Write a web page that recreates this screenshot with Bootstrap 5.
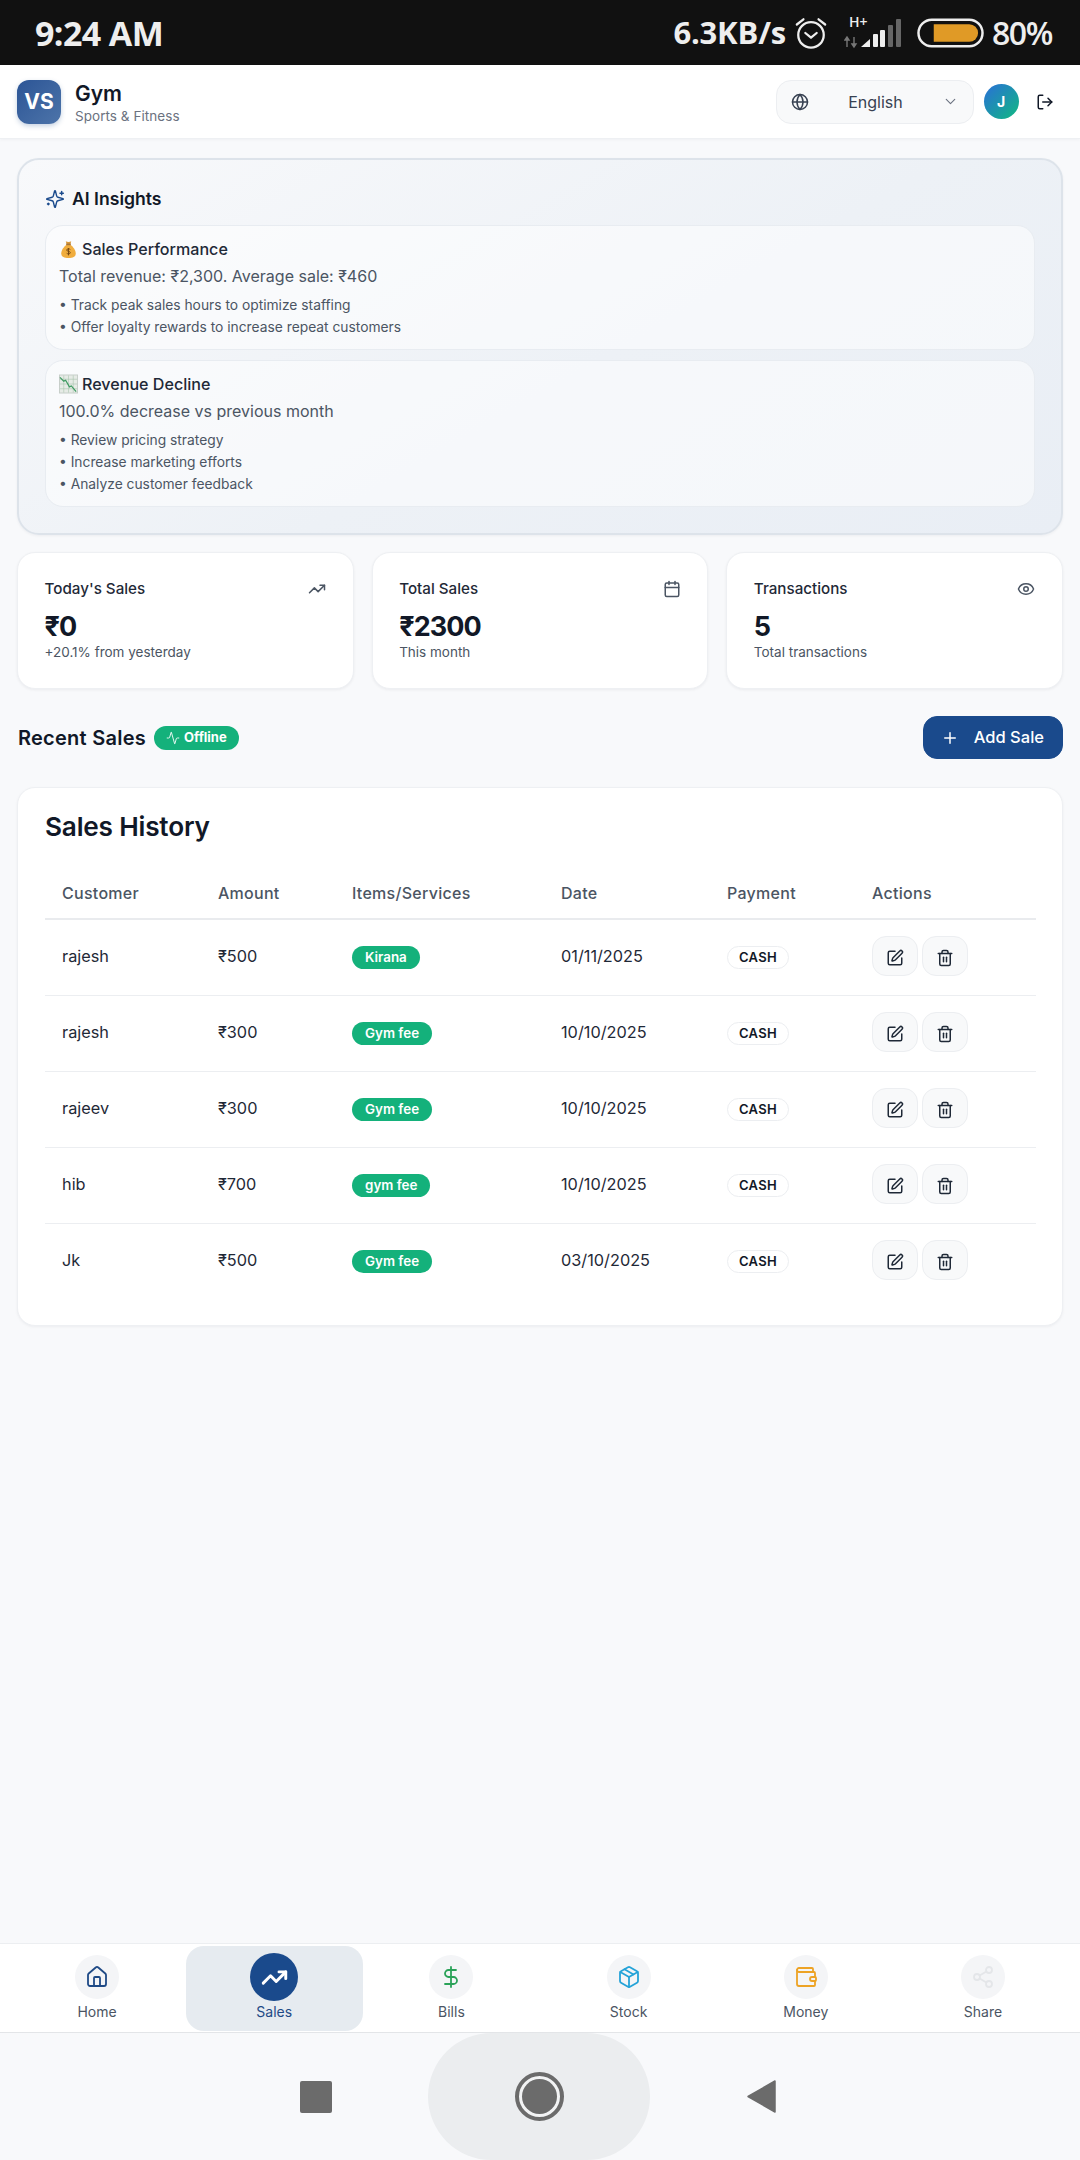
<!DOCTYPE html>
<html lang="en">
<head>
<meta charset="utf-8">
<title>Gym Sales</title>
<link href="https://cdn.jsdelivr.net/npm/bootstrap@5.3.0/dist/css/bootstrap.min.css" rel="stylesheet">
<style>
:root{--ink:#111827;--muted:#4b5563;--navy:#1a4a8c;--green:#14b17b;}
html,body{height:100%;}
body{height:2160px;background:#f8f9fb;font-family:Inter,"Noto Sans",sans-serif;color:var(--ink);overflow:hidden;}
.ic{width:18px;height:18px;fill:none;stroke:currentColor;stroke-width:2;stroke-linecap:round;stroke-linejoin:round;flex:none;}
.phone-status{height:65px;background:#111;color:#eee;font-family:"Open Sans",sans-serif;padding:0 28px 0 35px;}
.st-time{font-size:34px;font-weight:700;letter-spacing:-.6px;line-height:1;}
.st-speed{font-size:31px;font-weight:700;line-height:1;letter-spacing:-.2px;}
.st-pct{font-size:32px;font-weight:600;line-height:1;letter-spacing:-1.4px;}
.app-head{height:74px;background:#fff;border-bottom:1px solid #eef0f3;box-shadow:0 1px 3px rgba(17,24,39,.04);padding:0 17px;}
.logo-tile{width:44px;height:44px;margin-right:14px;border-radius:12px;background:linear-gradient(135deg,#2c5596,#4d74a9);color:#fff;font-weight:700;font-size:21px;box-shadow:0 2px 5px rgba(26,74,140,.25);}
.head-txt{padding-top:3px;}
.head-name{font-size:21px;font-weight:600;line-height:26px;}
.head-sub{font-size:13.5px;line-height:18px;color:#6b7280;letter-spacing:.05px;}
.lang-box{width:198px;height:44px;background:#f8f9fa;border:1px solid #eceef1;border-radius:15px;padding:0 14px;font-size:16px;color:#374151;}
.lang-box .lbl{flex:1;text-align:center;}
.lang-box .chev{color:#6b7280;width:17px;height:17px;stroke-width:1.6;}
.avatar-dot{width:35px;height:35px;margin-left:9.5px;border-radius:50%;background:linear-gradient(135deg,#2a6fd8,#10b981);color:#fff;font-weight:700;font-size:14px;}
.out-ic{margin-left:17px;margin-right:9.5px;}
.page-body{padding:19px 17px 0;}
.ai-panel{border:2px solid #dde3ea;border-radius:22px;background:linear-gradient(150deg,#f8f9fb 0%,#edf1f6 55%,#e9eef5 100%);padding:26px;margin-bottom:17px;box-shadow:0 1px 3px rgba(17,24,39,.05);}
.ai-title{font-size:17.6px;font-weight:600;line-height:26px;margin-bottom:13px;color:#111827;gap:7px;}
.ai-title .ic{color:var(--navy);width:20px;height:20px;stroke-width:1.7;}
.ai-item{background:rgba(255,255,255,.5);border:1px solid #e8ecf1;border-radius:18px;padding:11px 13px 11px;margin-bottom:10px;}
.ai-item:last-child{margin-bottom:0;}
.ai-h{font-size:16.1px;font-weight:500;line-height:24px;color:#1f2937;}
.ai-d{font-size:16px;line-height:24px;color:#4b5563;margin-top:3px;margin-bottom:6px;}
.ai-b{font-size:13.8px;line-height:22px;color:#4b5563;}
.ai-b ul{margin:0;padding:0;list-style:none;}
.emo{width:19px;height:20px;vertical-align:-4px;margin-right:4px;}
.stat-grid{display:grid;grid-template-columns:repeat(3,1fr);gap:18px;margin-bottom:27px;}
.stat-tile{height:137px;border:1px solid #eef0f3;border-radius:18px;padding:24px 26.5px;box-shadow:0 1px 3px rgba(17,24,39,.06);}
.stat-t{font-size:15.2px;font-weight:500;line-height:24px;color:#1f2937;}
.stat-t .ic{color:#4b5563;}
.stat-v{font-size:27px;font-weight:700;letter-spacing:-.9px;line-height:32px;margin-top:10px;color:#111827;}
.stat-s{font-size:13.5px;line-height:20px;margin-top:-1px;color:#4b5563;}
.rec-h{font-size:20px;font-weight:600;line-height:1;color:#111827;letter-spacing:.25px;margin-left:1px;}
.off-pill{height:24px;padding:0 12px;border-radius:12px;background:var(--green);color:#fff;font-size:13px;font-weight:700;gap:4px;}
.off-pill .ic{width:14px;height:14px;stroke-width:1.5;}
.add-btn{width:140px;height:43px;background:var(--navy);border-color:var(--navy);color:#fff;border-radius:14px;font-size:16.5px;font-weight:500;padding:0 18px 0 17px;}
.add-btn:hover{background:var(--navy);color:#fff;}
.sec-row{margin-bottom:28px;}
.hist-card{border:1px solid #eef0f3;border-radius:18px;padding:19px 27px 26px;box-shadow:0 1px 3px rgba(17,24,39,.05);}
.hist-t{font-size:26.2px;font-weight:600;line-height:40px;margin:0 0 20px;color:#111827;letter-spacing:-.2px;}
.sale-tbl{margin:0;table-layout:fixed;width:100%;}
.sale-tbl th,.sale-tbl td{padding:0 0 0 17px;vertical-align:middle;background:transparent;border-bottom:1px solid #eceef1;font-size:16.3px;}
.sale-tbl th{height:52px;font-weight:500;font-size:16px;color:#4b5563;letter-spacing:.28px;border-bottom:2px solid #e9ebee;}
.sale-tbl td{height:76px;color:#1f2937;padding-bottom:2px;}
.sale-tbl tbody tr:last-child td{border-bottom:0;}
.cw1{width:156px;}.cw2{width:134px;}.cw3{width:209px;}.cw4{width:166px;}.cw5{width:145px;}.cw6{width:181px;}
.tag-green{display:inline-block;height:23px;line-height:23px;padding:0 13px;border-radius:12px;background:var(--green);color:#fff;font-size:13.4px;font-weight:600;}
.tag-pay{display:inline-block;height:23px;line-height:21px;padding:0 11px;border-radius:12px;border:1px solid #eceef1;background:#fff;color:#111827;font-size:13px;font-weight:600;letter-spacing:.3px;}
.act-btn{width:45.5px;height:40px;padding:0;border-radius:14px;background:#f8f9fa;border:1px solid #eceef1;color:#1f2937;}
.act-btn:hover{background:#f8f9fa;color:#1f2937;}
.act-gap{gap:4.5px;}
.nav-tabs-bottom{margin-top:auto;background:#fff;border-top:1px solid #eceef1;border-bottom:1px solid #e3e5e8;padding:2px 8.5px 1px;}
.tab-item{flex:1 1 0;height:85px;border-radius:18px;text-decoration:none;color:#4b5563;font-size:14px;line-height:20px;padding-top:9px;}
.tab-disc{width:44px;height:44px;border-radius:50%;background:#f4f5f7;margin-bottom:3px;}
.tab-disc .ic{width:24px;height:24px;stroke-width:1.8;}
.tab-item.on{background:#e6ebf0;color:#1f4a86;padding-top:7px;}
.tab-item.on .tab-disc{width:48px;height:48px;background:var(--navy);color:#fff;margin-bottom:1px;}
.tab-item.on .ic{stroke-width:2.6;width:27px;height:27px;}
.c-navy{color:#1f4a86;}.c-green{color:#2aa258;}.c-sky{color:#25a3d8;}.c-amber{color:#eda325;}
.tab-disc.c-pale .ic{color:#e4e6e9;}
.phone-nav{height:127px;background:#f8f9fb;gap:96px;padding-right:3px;}
.nav-square{width:32px;height:32px;background:#6b6b6b;border-radius:2px;}
.nav-blob{width:222px;height:127px;border-radius:64px;background:#ebedef;}
.nav-ring{width:49px;height:49px;border-radius:50%;border:4px solid #6b6b6b;padding:3px;background:#f2f3f4;}
.nav-ring span{display:block;width:100%;height:100%;border-radius:50%;background:#6b6b6b;}
.nav-back{width:31px;height:35px;fill:#6b6b6b;stroke:#6b6b6b;stroke-width:1.5;stroke-linejoin:round;}
</style>
</head>
<body class="d-flex flex-column">
<svg width="0" height="0" class="position-absolute">
<symbol id="i-globe" viewBox="0 0 24 24"><circle cx="12" cy="12" r="10"/><path d="M12 2a14.5 14.5 0 0 0 0 20 14.5 14.5 0 0 0 0-20"/><path d="M2 12h20"/></symbol>
<symbol id="i-chev" viewBox="0 0 24 24"><path d="m6 9 6 6 6-6"/></symbol>
<symbol id="i-out" viewBox="0 0 24 24"><path d="M9 21H5a2 2 0 0 1-2-2V5a2 2 0 0 1 2-2h4"/><polyline points="16 17 21 12 16 7"/><line x1="21" y1="12" x2="9" y2="12"/></symbol>
<symbol id="i-spark" viewBox="0 0 24 24"><path d="M9.937 15.5A2 2 0 0 0 8.5 14.063l-6.135-1.582a.5.5 0 0 1 0-.962L8.5 9.936A2 2 0 0 0 9.937 8.5l1.582-6.135a.5.5 0 0 1 .963 0L14.063 8.5A2 2 0 0 0 15.5 9.937l6.135 1.581a.5.5 0 0 1 0 .964L15.5 14.063a2 2 0 0 0-1.437 1.437l-1.582 6.135a.5.5 0 0 1-.963 0z"/><path d="M20 3v4"/><path d="M22 5h-4"/><path d="M4 17v2"/><path d="M5 18H3"/></symbol>
<symbol id="i-trend" viewBox="0 0 24 24"><polyline points="22 7 13.5 15.5 8.5 10.5 2 17"/><polyline points="16 7 22 7 22 13"/></symbol>
<symbol id="i-cal" viewBox="0 0 24 24"><path d="M8 2v4"/><path d="M16 2v4"/><rect x="3" y="4" width="18" height="18" rx="2"/><path d="M3 10h18"/></symbol>
<symbol id="i-eye" viewBox="0 0 24 24"><path d="M2.062 12.348a1 1 0 0 1 0-.696 10.75 10.75 0 0 1 19.876 0 1 1 0 0 1 0 .696 10.75 10.75 0 0 1-19.876 0"/><circle cx="12" cy="12" r="3"/></symbol>
<symbol id="i-act" viewBox="0 0 24 24"><path d="M22 12h-2.48a2 2 0 0 0-1.93 1.46l-2.35 8.36a.25.25 0 0 1-.48 0L9.24 2.18a.25.25 0 0 0-.48 0l-2.35 8.36A2 2 0 0 1 4.49 12H2"/></symbol>
<symbol id="i-plus" viewBox="0 0 24 24"><path d="M5 12h14"/><path d="M12 5v14"/></symbol>
<symbol id="i-pen" viewBox="0 0 24 24"><path d="M12 3H5a2 2 0 0 0-2 2v14a2 2 0 0 0 2 2h14a2 2 0 0 0 2-2v-7"/><path d="M18.375 2.625a1 1 0 0 1 3 3l-9.013 9.014a2 2 0 0 1-.853.505l-2.873.84a.5.5 0 0 1-.62-.62l.84-2.873a2 2 0 0 1 .506-.852z"/></symbol>
<symbol id="i-trash" viewBox="0 0 24 24"><path d="M3 6h18"/><path d="M19 6v14c0 1-1 2-2 2H7c-1 0-2-1-2-2V6"/><path d="M8 6V4c0-1 1-2 2-2h4c1 0 2 1 2 2v2"/><line x1="10" y1="11" x2="10" y2="17"/><line x1="14" y1="11" x2="14" y2="17"/></symbol>
<symbol id="i-home" viewBox="0 0 24 24"><path d="M15 21v-8a1 1 0 0 0-1-1h-4a1 1 0 0 0-1 1v8"/><path d="M3 10a2 2 0 0 1 .709-1.528l7-5.999a2 2 0 0 1 2.582 0l7 5.999A2 2 0 0 1 21 10v9a2 2 0 0 1-2 2H5a2 2 0 0 1-2-2z"/></symbol>
<symbol id="i-dollar" viewBox="0 0 24 24"><line x1="12" y1="2" x2="12" y2="22"/><path d="M17 5H9.5a3.5 3.5 0 0 0 0 7h5a3.5 3.5 0 0 1 0 7H6"/></symbol>
<symbol id="i-box" viewBox="0 0 24 24"><path d="M11 21.73a2 2 0 0 0 2 0l7-4A2 2 0 0 0 21 16V8a2 2 0 0 0-1-1.73l-7-4a2 2 0 0 0-2 0l-7 4A2 2 0 0 0 3 8v8a2 2 0 0 0 1 1.73z"/><path d="M12 22V12"/><polyline points="3.29 7 12 12 20.71 7"/><path d="m7.5 4.27 9 5.15"/></symbol>
<symbol id="i-wallet" viewBox="0 0 24 24"><path d="M19 7V4a1 1 0 0 0-1-1H5a2 2 0 0 0 0 4h15a1 1 0 0 1 1 1v4h-3a2 2 0 0 0 0 4h3a1 1 0 0 0 1-1v-2a1 1 0 0 0-1-1"/><path d="M3 5v14a2 2 0 0 0 2 2h15a1 1 0 0 0 1-1v-4"/></symbol>
<symbol id="i-share" viewBox="0 0 24 24"><circle cx="18" cy="5" r="3"/><circle cx="6" cy="12" r="3"/><circle cx="18" cy="19" r="3"/><line x1="8.59" y1="13.51" x2="15.42" y2="17.49"/><line x1="15.41" y1="6.51" x2="8.59" y2="10.49"/></symbol>
</svg>

<div class="phone-status d-flex align-items-center justify-content-between flex-none">
  <span class="st-time">9:24 AM</span>
  <div class="d-flex align-items-center">
    <span class="st-speed">6.3KB/s</span>
    <svg class="ms-2" width="34" height="36" viewBox="0 0 36 36" fill="none" stroke="#eee" stroke-width="2.4" stroke-linecap="round" stroke-linejoin="round"><circle cx="18" cy="20" r="13.5"/><path d="M12 18l6 5 6-5"/><path d="M3 9l7-5.5"/><path d="M33 9l-7-5.5"/></svg>
    <svg class="ms-3" width="57" height="44" viewBox="0 10 57 44"><text x="5" y="26" fill="#eee" font-family="Open Sans,sans-serif" font-weight="600" font-size="14">H+</text><path d="M3 46v-9M1 39l2-3 2 3zM10 36v9M8 43l2 3 2-3z" stroke="#777" stroke-width="1.4" fill="#777"/><path d="M17 46l9-8v8z" fill="#eee"/><rect x="29" y="33" width="5" height="13" rx="1" fill="#eee"/><rect x="36" y="29" width="5" height="17" rx="1" fill="#eee"/><rect x="44" y="24" width="5" height="22" rx="1" fill="#666"/><rect x="52" y="18" width="5" height="28" rx="1" fill="#666"/></svg>
    <svg class="ms-3" width="67" height="30" viewBox="0 0 68 30"><rect x="1.500" y="1.500" width="65" height="27" rx="13.500" fill="none" stroke="#eee" stroke-width="2.500"/><path d="M17 6h36a9 9 0 0 1 0 18H17z" fill="#e09a26"/></svg>
    <span class="st-pct ms-2">80%</span>
  </div>
</div>

<header class="app-head d-flex align-items-center justify-content-between">
  <div class="d-flex align-items-center">
    <div class="logo-tile d-flex align-items-center justify-content-center">VS</div>
    <div class="head-txt">
      <div class="head-name">Gym</div>
      <div class="head-sub">Sports &amp; Fitness</div>
    </div>
  </div>
  <div class="d-flex align-items-center">
    <div class="lang-box d-flex align-items-center">
      <svg class="ic"><use href="#i-globe"/></svg>
      <span class="lbl">English</span>
      <svg class="ic chev"><use href="#i-chev"/></svg>
    </div>
    <div class="avatar-dot d-flex align-items-center justify-content-center">J</div>
    <svg class="ic out-ic"><use href="#i-out"/></svg>
  </div>
</header>

<main class="page-body flex-grow-1">
  <section class="ai-panel">
    <div class="ai-title d-flex align-items-center"><svg class="ic"><use href="#i-spark"/></svg>AI Insights</div>
    <div class="ai-item">
      <div class="ai-h"><svg class="emo" viewBox="0 0 20 22"><path d="M7 2.500c1.500 1 4.500 1 6 0L12 6H8z" fill="#d99a3c"/><path d="M8 6h4c3 2.500 6 6 6 10 0 3.500-3 5-8 5s-8-1.500-8-5c0-4 3-7.500 6-10z" fill="#f0ad3e"/><rect x="7.500" y="5" width="5" height="1.800" fill="#a8753a"/><path d="M12 11.500c-1-1-4-1-4 .7 0 1.800 4 1 4 2.800 0 1.700-3 1.700-4 .7M10 10v8" fill="none" stroke="#7a4a12" stroke-width="1.100"/></svg>Sales Performance</div>
      <div class="ai-d">Total revenue: ₹2,300. Average sale: ₹460</div>
      <div class="ai-b"><ul><li>• Track peak sales hours to optimize staffing</li><li>• Offer loyalty rewards to increase repeat customers</li></ul></div>
    </div>
    <div class="ai-item">
      <div class="ai-h"><svg class="emo" viewBox="0 0 20 20"><rect x="0.500" y="0.500" width="19" height="19" fill="#e6ebe6" stroke="#c6cdc8"/><path d="M5 1v18M10 1v18M15 1v18M1 5h18M1 10h18M1 15h18" stroke="#a9c4ae" stroke-width=".6"/><path d="M1 3l4 4 2-1 4 7 2-1 5 6" fill="none" stroke="#3f9b62" stroke-width="1.300"/></svg>Revenue Decline</div>
      <div class="ai-d">100.0% decrease vs previous month</div>
      <div class="ai-b"><ul><li>• Review pricing strategy</li><li>• Increase marketing efforts</li><li>• Analyze customer feedback</li></ul></div>
    </div>
  </section>

  <section class="stat-grid">
    <div class="card stat-tile">
      <div class="stat-t d-flex justify-content-between align-items-center"><span>Today's Sales</span><svg class="ic"><use href="#i-trend"/></svg></div>
      <div class="stat-v">₹0</div>
      <div class="stat-s">+20.1% from yesterday</div>
    </div>
    <div class="card stat-tile">
      <div class="stat-t d-flex justify-content-between align-items-center"><span>Total Sales</span><svg class="ic"><use href="#i-cal"/></svg></div>
      <div class="stat-v">₹2300</div>
      <div class="stat-s">This month</div>
    </div>
    <div class="card stat-tile">
      <div class="stat-t d-flex justify-content-between align-items-center"><span>Transactions</span><svg class="ic"><use href="#i-eye"/></svg></div>
      <div class="stat-v">5</div>
      <div class="stat-s">Total transactions</div>
    </div>
  </section>

  <div class="sec-row d-flex align-items-center justify-content-between">
    <div class="d-flex align-items-center gap-2">
      <span class="rec-h">Recent Sales</span>
      <span class="off-pill d-inline-flex align-items-center"><svg class="ic"><use href="#i-act"/></svg>Offline</span>
    </div>
    <button class="btn add-btn d-flex align-items-center justify-content-between"><svg class="ic"><use href="#i-plus"/></svg>Add Sale</button>
  </div>

  <section class="card hist-card">
    <h2 class="hist-t">Sales History</h2>
    <table class="table sale-tbl">
      <colgroup><col class="cw1"><col class="cw2"><col class="cw3"><col class="cw4"><col class="cw5"><col class="cw6"></colgroup>
      <thead><tr><th>Customer</th><th>Amount</th><th>Items/Services</th><th>Date</th><th>Payment</th><th>Actions</th></tr></thead>
      <tbody>
        <tr><td>rajesh</td><td>₹500</td><td><span class="tag-green">Kirana</span></td><td>01/11/2025</td><td><span class="tag-pay">CASH</span></td><td><div class="d-flex act-gap"><button class="btn act-btn"><svg class="ic"><use href="#i-pen"/></svg></button><button class="btn act-btn"><svg class="ic"><use href="#i-trash"/></svg></button></div></td></tr>
        <tr><td>rajesh</td><td>₹300</td><td><span class="tag-green">Gym fee</span></td><td>10/10/2025</td><td><span class="tag-pay">CASH</span></td><td><div class="d-flex act-gap"><button class="btn act-btn"><svg class="ic"><use href="#i-pen"/></svg></button><button class="btn act-btn"><svg class="ic"><use href="#i-trash"/></svg></button></div></td></tr>
        <tr><td>rajeev</td><td>₹300</td><td><span class="tag-green">Gym fee</span></td><td>10/10/2025</td><td><span class="tag-pay">CASH</span></td><td><div class="d-flex act-gap"><button class="btn act-btn"><svg class="ic"><use href="#i-pen"/></svg></button><button class="btn act-btn"><svg class="ic"><use href="#i-trash"/></svg></button></div></td></tr>
        <tr><td>hib</td><td>₹700</td><td><span class="tag-green">gym fee</span></td><td>10/10/2025</td><td><span class="tag-pay">CASH</span></td><td><div class="d-flex act-gap"><button class="btn act-btn"><svg class="ic"><use href="#i-pen"/></svg></button><button class="btn act-btn"><svg class="ic"><use href="#i-trash"/></svg></button></div></td></tr>
        <tr><td>Jk</td><td>₹500</td><td><span class="tag-green">Gym fee</span></td><td>03/10/2025</td><td><span class="tag-pay">CASH</span></td><td><div class="d-flex act-gap"><button class="btn act-btn"><svg class="ic"><use href="#i-pen"/></svg></button><button class="btn act-btn"><svg class="ic"><use href="#i-trash"/></svg></button></div></td></tr>
      </tbody>
    </table>
  </section>
</main>

<nav class="nav-tabs-bottom d-flex">
  <a class="tab-item d-flex flex-column align-items-center" href="#"><span class="tab-disc c-navy d-flex align-items-center justify-content-center"><svg class="ic"><use href="#i-home"/></svg></span>Home</a>
  <a class="tab-item on d-flex flex-column align-items-center" href="#"><span class="tab-disc d-flex align-items-center justify-content-center"><svg class="ic"><use href="#i-trend"/></svg></span>Sales</a>
  <a class="tab-item d-flex flex-column align-items-center" href="#"><span class="tab-disc c-green d-flex align-items-center justify-content-center"><svg class="ic"><use href="#i-dollar"/></svg></span>Bills</a>
  <a class="tab-item d-flex flex-column align-items-center" href="#"><span class="tab-disc c-sky d-flex align-items-center justify-content-center"><svg class="ic"><use href="#i-box"/></svg></span>Stock</a>
  <a class="tab-item d-flex flex-column align-items-center" href="#"><span class="tab-disc c-amber d-flex align-items-center justify-content-center"><svg class="ic"><use href="#i-wallet"/></svg></span>Money</a>
  <a class="tab-item d-flex flex-column align-items-center" href="#"><span class="tab-disc c-pale d-flex align-items-center justify-content-center"><svg class="ic"><use href="#i-share"/></svg></span>Share</a>
</nav>

<div class="phone-nav d-flex align-items-center justify-content-center">
  <span class="nav-square"></span>
  <div class="nav-blob d-flex align-items-center justify-content-center"><div class="nav-ring"><span></span></div></div>
  <svg class="nav-back" viewBox="0 0 31 35"><path d="M29 2v31L2 17.500z"/></svg>
</div>
</body>
</html>
